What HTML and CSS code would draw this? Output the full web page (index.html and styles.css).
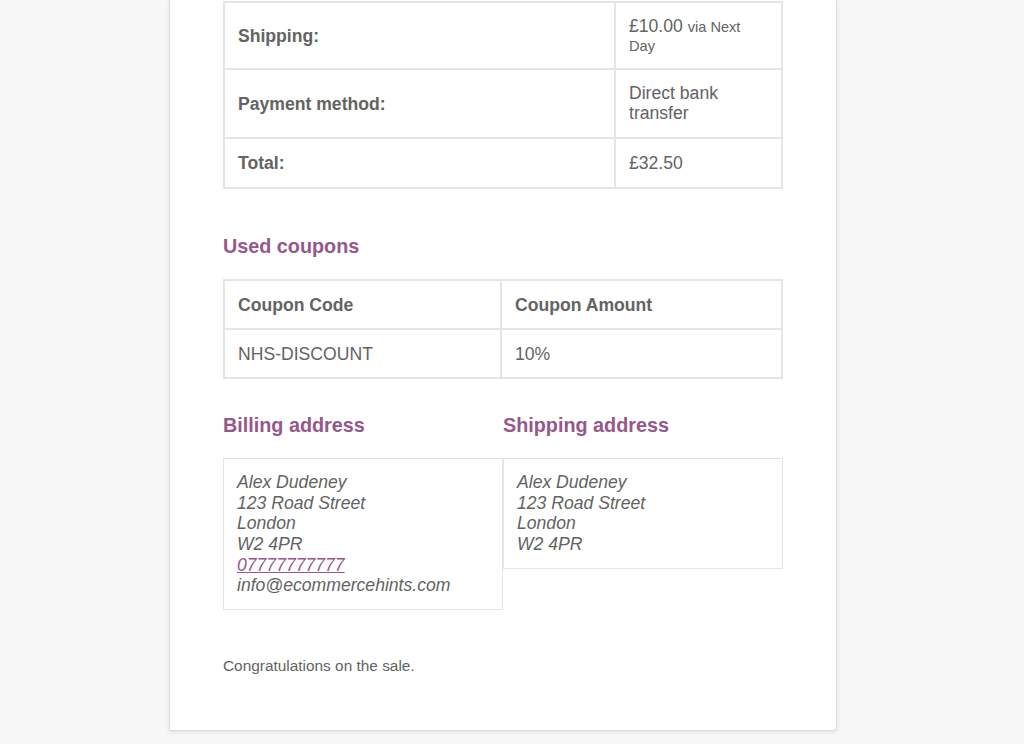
FILE: index.html
```html
<!DOCTYPE html>
<html>
<head>
<meta charset="UTF-8">
<title>New order</title>
<link rel="stylesheet" href="styles.css">
</head>
<body>
<div class="page">
	<div class="email-card">
		<table class="order-totals">
			<tr>
				<th class="label-cell">Shipping:</th>
				<td class="value-cell shipping-cell">£10.00 <small>via Next Day</small></td>
			</tr>
			<tr>
				<th class="label-cell">Payment method:</th>
				<td class="value-cell payment-cell">Direct bank transfer</td>
			</tr>
			<tr>
				<th class="label-cell">Total:</th>
				<td class="value-cell">£32.50</td>
			</tr>
		</table>

		<h2 class="section-head coupons-head">Used coupons</h2>
		<table class="coupon-table">
			<tr>
				<th class="coupon-code">Coupon Code</th>
				<th>Coupon Amount</th>
			</tr>
			<tr>
				<td>NHS-DISCOUNT</td>
				<td>10%</td>
			</tr>
		</table>

		<div class="address-row">
			<div class="address-col">
				<h2 class="section-head">Billing address</h2>
				<address class="address-box">
					Alex Dudeney<br>
					123 Road Street<br>
					London<br>
					W2 4PR<br>
					<a href="tel:07777777777">07777777777</a><br>
					info@ecommercehints.com
				</address>
			</div>
			<div class="address-col">
				<h2 class="section-head">Shipping address</h2>
				<address class="address-box">
					Alex Dudeney<br>
					123 Road Street<br>
					London<br>
					W2 4PR
				</address>
			</div>
		</div>

		<p class="closing-note">Congratulations on the sale.</p>
	</div>
</div>
</body>
</html>
```

FILE: styles.css
```css
body{
	margin: 0;
	background: #f7f7f7;
	font-family: "Liberation Sans", Arial, sans-serif;
	color: #636363;
}
.page{
	padding: 0 0 13px 169px;
}
.email-card{
	width: 668px;
	box-sizing: border-box;
	background: #fff;
	border: 1px solid #dedede;
	border-top: none;
	border-radius: 0 0 3px 3px;
	box-shadow: 0 1px 4px rgba(0,0,0,0.1);
	padding: 1px 53px 53px;
}
table{
	border-collapse: separate;
	border-spacing: 0;
	width: 560px;
	border: 1px solid #e5e5e5;
	font-size: 17.6px;
	color: #636363;
}
th, td{
	border: 1px solid #e5e5e5;
	text-align: left;
	vertical-align: middle;
	line-height: 20px;
}
.order-totals th, .order-totals td{
	padding: 14px 13px;
}
.order-totals .label-cell{
	width: 363px;
}
.order-totals .shipping-cell{
	line-height: 18.5px;
}
.order-totals small{
	font-size: 14.6px;
	line-height: 14px;
}
.order-totals .payment-cell{
	line-height: 19.5px;
}
.section-head{
	color: #96588a;
	font-size: 19.8px;
	font-weight: bold;
	line-height: 26px;
	margin: 33px 0 20px;
}
.coupons-head{
	margin-top: 44px;
}
.coupon-table th, .coupon-table td{
	padding: 13.5px 13px;
}
.coupon-table .coupon-code{
	width: 249px;
}
.address-row{
	display: grid;
	grid-template-columns: 280px 280px;
	align-items: start;
}
.address-col .section-head{
	margin-bottom: 20px;
}
.address-box{
	font-style: italic;
	font-size: 17.6px;
	line-height: 20.6px;
	border: 1px solid #e5e5e5;
	padding: 13.2px 13px;
}
.address-box a{
	color: #96588a;
}
.closing-note{
	font-size: 15.4px;
	line-height: 23px;
	margin: 44px 0 0;
}
```
